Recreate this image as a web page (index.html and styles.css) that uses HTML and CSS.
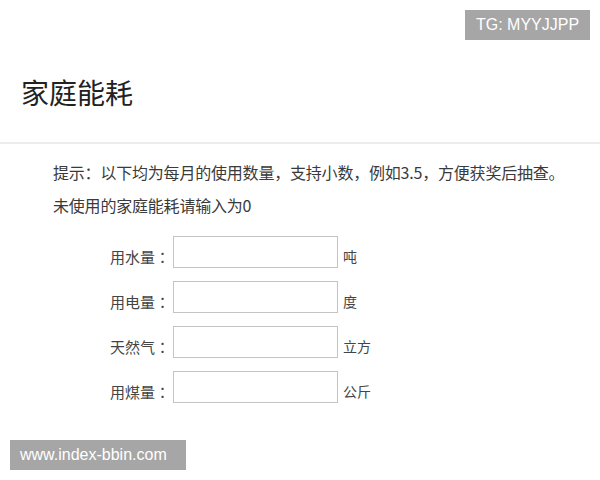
FILE: index.html
```html
<!DOCTYPE html>
<html lang="zh-CN">
<head>
<meta charset="utf-8">
<title>家庭能耗</title>
<link rel="stylesheet" href="styles.css">
</head>
<body>
<div class="page">
  <header class="header">
    <h1 class="title">家庭能耗</h1>
  </header>
  <section class="content">
    <p class="tip">提示：以下均为每月的使用数量，支持小数，例如3.5，方便获奖后抽查。</p>
    <p class="tip">未使用的家庭能耗请输入为0</p>
    <form class="form">
      <div class="row"><span class="label" lang="zh-TW">用水量：</span><input class="field" type="text"><span class="unit">吨</span></div>
      <div class="row"><span class="label" lang="zh-TW">用电量：</span><input class="field" type="text"><span class="unit">度</span></div>
      <div class="row"><span class="label" lang="zh-TW">天然气：</span><input class="field" type="text"><span class="unit">立方</span></div>
      <div class="row"><span class="label" lang="zh-TW">用煤量：</span><input class="field" type="text"><span class="unit">公斤</span></div>
    </form>
  </section>
  <div class="badge badge-top">TG: MYYJJPP</div>
  <div class="badge badge-bottom">www.index-bbin.com</div>
</div>
</body>
</html>
```
FILE: styles.css
```css
html, body {
  margin: 0;
  padding: 0;
  background: #fff;
}
.page {
  position: relative;
  width: 600px;
  height: 480px;
  overflow: hidden;
  font-family: "Noto Sans CJK SC", "Noto Sans", sans-serif;
  color: #333;
}
.header {
  padding: 72px 0 30px 21px;
  border-bottom: 2px solid #ececec;
}
.title {
  margin: 0;
  font-size: 28px;
  line-height: 40px;
  font-weight: 400;
  color: #222;
}
.content {
  padding: 12px 0 0 53px;
}
.tip {
  margin: 0;
  font-size: 16px;
  line-height: 33px;
  color: #3a3a3a;
  white-space: nowrap;
  letter-spacing: -0.2px;
}
.form {
  display: flex;
  flex-direction: column;
  gap: 13px;
  margin-top: 14px;
}
.row {
  display: flex;
  align-items: center;
  height: 32px;
}
.label {
  box-sizing: border-box;
  width: 120px;
  text-align: right;
  font-family: "Noto Sans CJK TC", "Noto Sans CJK SC", sans-serif;
  font-size: 15px;
  line-height: 20px;
  padding-top: 10px;
  padding-right: 3px;
  color: #444;
}
.field {
  box-sizing: border-box;
  width: 165px;
  height: 32px;
  margin: 0;
  border: 1px solid #c4c4c4;
  background: #fff;
  padding: 0 6px;
  outline: none;
}
.unit {
  margin-left: 5px;
  font-size: 14px;
  line-height: 20px;
  padding-top: 8px;
  color: #444;
}
.badge {
  position: absolute;
  background: #a6a6a6;
  color: #fff;
  font-family: "Liberation Sans", Arial, sans-serif;
  font-size: 16px;
  line-height: 30px;
  height: 30px;
  white-space: nowrap;
}
.badge-top {
  top: 10px;
  left: 465px;
  width: 125px;
  box-sizing: border-box;
  padding-left: 11px;
}
.badge-bottom {
  top: 440px;
  left: 10px;
  width: 176px;
  box-sizing: border-box;
  padding-left: 10px;
}
```
